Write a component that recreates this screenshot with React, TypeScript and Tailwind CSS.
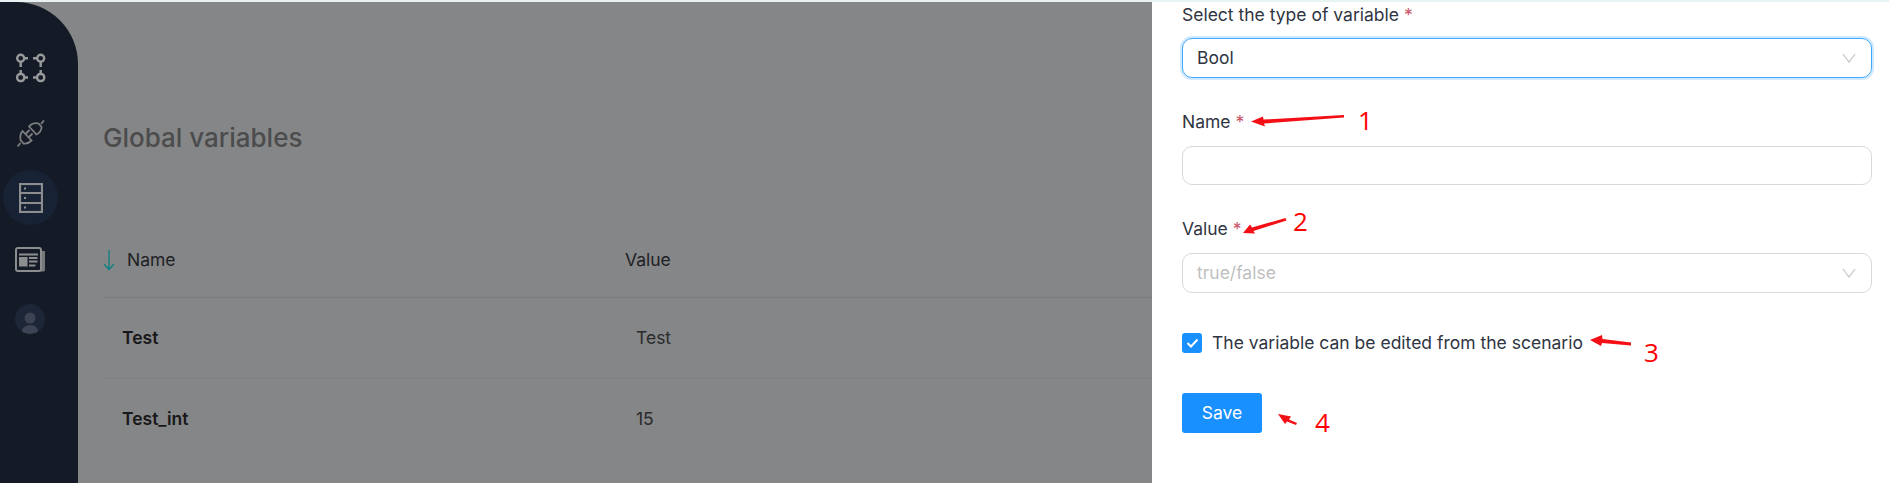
import React from 'react';

const font = 'font-[Inter,"Liberation_Sans",sans-serif]';

const Chevron: React.FC = () => (
  <svg width="14" height="10" viewBox="0 0 14 10" fill="none" stroke="#c4c4c4" strokeWidth="1.2" className="shrink-0">
    <path d="M1 1 L7 9 L13 1" />
  </svg>
);

const Required: React.FC = () => <span className="text-[#c9566a]"> *</span>;

const Sidebar: React.FC = () => (
  <aside className="flex h-full w-[78px] shrink-0 flex-col rounded-tr-[62px] bg-[#141a26]">
    <div className="ml-[16px] mt-[51px]">
      <svg width="30" height="30" viewBox="0 0 30 30" fill="none" stroke="#98999b" strokeWidth="2.4">
        <circle cx="4.7" cy="5.3" r="3.5" />
        <circle cx="24.7" cy="5.3" r="3.5" />
        <rect x="1.2" y="21" width="7" height="7" rx="3" />
        <rect x="21.2" y="21" width="7" height="7" rx="3" />
        <path d="M4.7 9v5M24.7 9v5M4.7 17v4M24.7 17v4M8 5.3h4M17 5.3h4M8 24.5h4M17 24.5h4" />
      </svg>
    </div>
    <div className="ml-[17px] mt-[37px]">
      <svg width="28" height="28" viewBox="0 0 28 28" fill="none" stroke="#7d7e80" strokeWidth="1.8">
        <path d="M12 6.5 L19.5 14.5 C22 13.5 25 10 24.5 7 L21.5 3.5 C18 2.5 14 4 12 6.5 Z" />
        <path d="M24 4 L27 0.5" />
        <path d="M5.5 11 L14.5 20.5 C12 23 9 24 6.5 23.5 L3.5 20 C3 17 3.5 13.5 5.5 11 Z" />
        <path d="M3.5 23 L0.5 26.5" />
        <path d="M8.5 14 L12.5 10 M11.5 17.5 L15.5 13.5" />
      </svg>
    </div>
    <div className="ml-[3px] mt-[22px] flex h-[55px] w-[55px] items-center justify-center rounded-full bg-[#182235]">
      <svg width="24" height="30" viewBox="0 0 24 30" fill="none" stroke="#8c8d8f" strokeWidth="2.2">
        <rect x="1" y="1" width="22" height="28" />
        <path d="M1 10h22M1 20h22" />
        <path d="M5 5.5h2M5 15h2M5 24.5h2" />
      </svg>
    </div>
    <div className="ml-[15px] mt-[22px]">
      <svg width="30" height="25" viewBox="0 0 30 25" fill="none">
        <path d="M26 4h4v19a1.5 1.5 0 0 1-1.5 1.5H25z" fill="#77787a" />
        <rect x="1" y="1" width="25" height="23" rx="2" stroke="#8c8d8f" strokeWidth="2" />
        <rect x="4" y="6.5" width="19" height="2" fill="#8c8d8f" />
        <rect x="4" y="10" width="8.5" height="9.5" fill="#8c8d8f" />
        <path d="M14 11h8.5M14 14.5h8.5M14 18.5h6.5" stroke="#8c8d8f" strokeWidth="1.8" />
      </svg>
    </div>
    <div className="ml-[15px] mt-[32px] flex h-[30px] w-[30px] items-end justify-center overflow-hidden rounded-full bg-[#1d2636]">
      <svg width="18" height="24" viewBox="0 0 18 24" fill="#3c4352">
        <circle cx="9" cy="8" r="5.5" />
        <ellipse cx="9" cy="21" rx="8" ry="6" />
      </svg>
    </div>
  </aside>
);

const VariablesTable: React.FC = () => (
  <main className="min-w-0 flex-1 pl-[25px]">
    <h1 className="mt-[121px] text-[26px] font-medium leading-[30px] text-[#4c4c4d]">Global variables</h1>
    <div className="mt-[89px] grid h-[56px] grid-cols-[522px_1fr] border-b border-[#7c7d7e] text-[17.5px] text-[#202124]">
      <div className="flex h-[36px] items-center">
        <svg width="12" height="22" viewBox="0 0 12 22" fill="none" stroke="#0c7f82" strokeWidth="1.3" className="mr-[12px]">
          <path d="M6 1v19M1 15l5 5.5 5-5.5" />
        </svg>
        <span>Name</span>
      </div>
      <div className="flex h-[36px] items-center">Value</div>
    </div>
    <div className="grid h-[81px] grid-cols-[514px_1fr] items-center border-b border-[#7e7f80] pl-[19px] text-[17.5px] text-[#18181a]">
      <div className="pt-[1px] font-semibold">Test</div>
      <div className="pt-[1px] text-[#2a2a2d]">Test</div>
    </div>
    <div className="grid h-[80px] grid-cols-[514px_1fr] items-center pl-[19px] text-[17.5px] text-[#18181a]">
      <div className="font-semibold">Test_int</div>
      <div className="text-[#2a2a2d]">15</div>
    </div>
  </main>
);

const VariableForm: React.FC = () => (
  <section className="h-full w-[737px] shrink-0 bg-white pl-[30px] pr-[17px] text-[17.5px] text-[#2f3542]">
    <div className="mt-[2px] h-[22px] leading-[22px]">
      Select the type of variable<Required />
    </div>
    <div className="mt-[12px] flex h-[40px] items-center justify-between rounded-[10px] border border-[#40a9ff] pl-[14px] pr-[15px] shadow-[0_0_0_2px_rgba(24,144,255,0.2)]">
      <span>Bool</span>
      <Chevron />
    </div>
    <div className="mt-[33px] h-[22px] leading-[22px]">
      Name<Required />
    </div>
    <div className="mt-[13px] h-[39px] rounded-[10px] border border-[#d9d9d9]" />
    <div className="mt-[33px] h-[22px] leading-[22px]">
      Value<Required />
    </div>
    <div className="mt-[13px] flex h-[40px] items-center justify-between rounded-[10px] border border-[#d9d9d9] pl-[14px] pr-[15px]">
      <span className="text-[#bfbfbf]">true/false</span>
      <Chevron />
    </div>
    <div className="mt-[40px] flex h-[20px] items-center">
      <span className="flex h-[20px] w-[20px] items-center justify-center rounded-[3px] bg-[#1890ff]">
        <svg width="13" height="10" viewBox="0 0 13 10" fill="none" stroke="white" strokeWidth="2">
          <path d="M1.5 5l3.5 3.5 6.5-7" />
        </svg>
      </span>
      <span className="ml-[10px]">The variable can be edited from the scenario</span>
    </div>
    <button className="mt-[40px] flex h-[40px] w-[80px] items-center justify-center rounded-[3px] bg-[#1890ff] text-[17.5px] text-white">
      Save
    </button>
  </section>
);

// red markers drawn on top of the screenshot
const Annotations: React.FC = () => (
  <div className="pointer-events-none absolute inset-0 font-['Open_Sans',sans-serif] text-[26px] leading-[26px] text-[#ff0000]">
    <svg width="1889" height="483" className="absolute left-0 top-0" fill="#f40f16">
      <path d="M1251 121.5 L1263 116.5 L1263.5 119.5 L1344 115 L1344 117.5 L1264 123.5 L1265 126.5 Z" />
      <path d="M1243 233 L1250 224.5 L1252 227.5 L1285.5 218 L1286.5 220.5 L1253.5 231 L1255 233.5 Z" />
      <path d="M1590 340 L1602 335 L1602.5 339 L1631 342.5 L1631 345.5 L1602 343 L1601 346 Z" />
      <path d="M1278 414 L1291 416.5 L1289 419.5 L1297 423 L1296 425 L1287 421.5 L1285 424 Z" />
    </svg>
    <span className="absolute left-[1358px] top-[107px]">1</span>
    <span className="absolute left-[1293px] top-[208px]">2</span>
    <span className="absolute left-[1644px] top-[339px]">3</span>
    <span className="absolute left-[1315px] top-[409px]">4</span>
  </div>
);

const App: React.FC = () => {
  return (
    <div className={`relative h-[483px] w-full overflow-hidden bg-[#858687] ${font}`}>
      <div className="flex h-[2px]">
        <div className="w-[1152px] bg-[#e9f1f3]" />
        <div className="flex-1 bg-[#e6f4f4]" />
      </div>
      <div className="flex h-[481px]">
        <Sidebar />
        <VariablesTable />
        <VariableForm />
      </div>
      <Annotations />
    </div>
  );
};

export default App;
